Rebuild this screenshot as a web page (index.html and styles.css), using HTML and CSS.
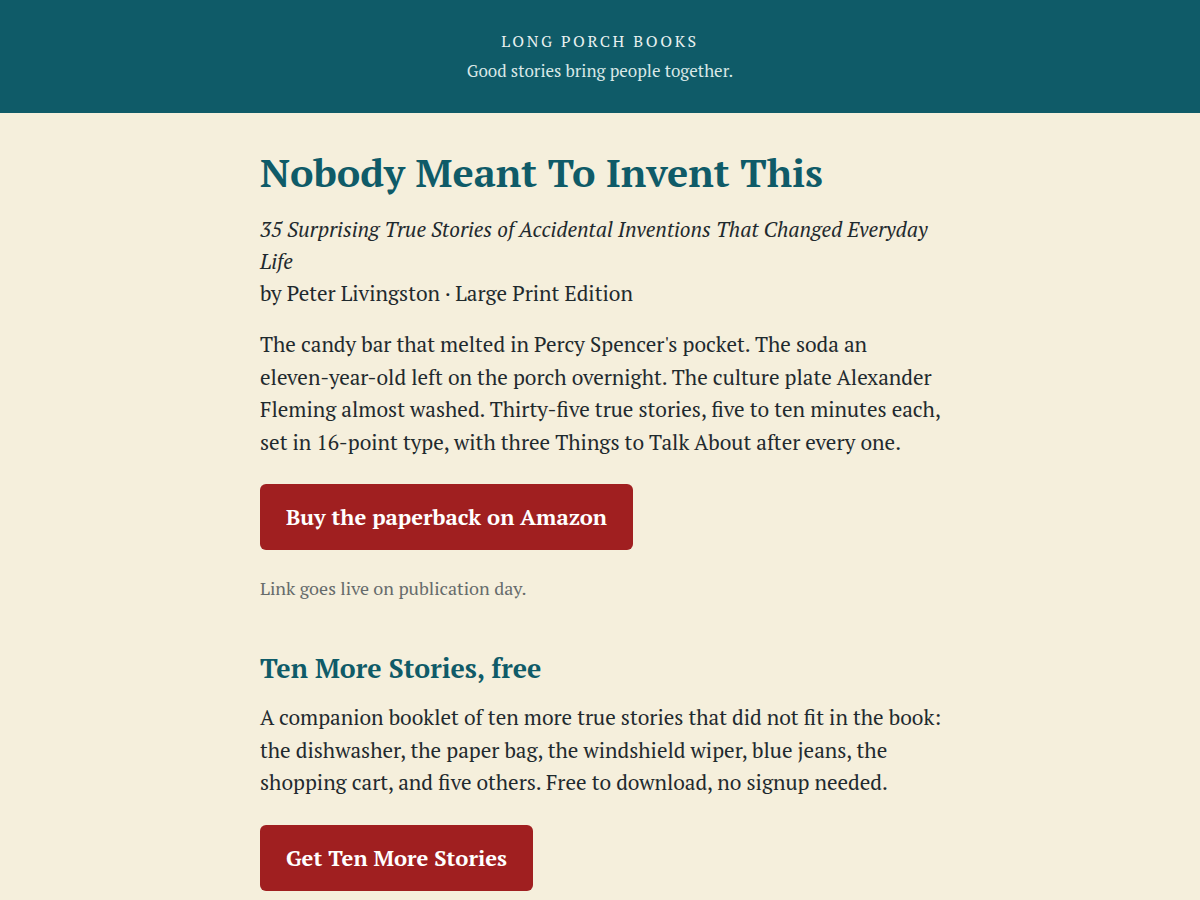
FILE: index.html
```html
<!DOCTYPE html>
<html lang="en">
<head>
<meta charset="utf-8">
<title>Nobody Meant To Invent This</title>
<link rel="stylesheet" href="styles.css">
</head>
<body>
<header class="site-header">
  <div class="brand">LONG PORCH BOOKS</div>
  <div class="tagline">Good stories bring people together.</div>
</header>
<main class="content">
  <h1 class="title">Nobody Meant To Invent This</h1>
  <p class="subtitle">35 Surprising True Stories of Accidental Inventions That Changed Everyday Life</p>
  <p class="byline">by Peter Livingston · Large Print Edition</p>
  <p class="body-text">The candy bar that melted in Percy Spencer's pocket. The soda an <span class="nowrap">eleven-year-old</span> left on the porch overnight. The culture plate Alexander Fleming almost washed. Thirty-five true stories, five to ten minutes each, set in <span class="nowrap">16-point</span> type, with three Things to Talk About after every one.</p>
  <a class="button" href="#">Buy the paperback on Amazon</a>
  <p class="note">Link goes live on publication day.</p>
  <h2 class="section-title">Ten More Stories, free</h2>
  <p class="body-text">A companion booklet of ten more true stories that did not fit in the book: the dishwasher, the paper bag, the windshield wiper, blue jeans, the shopping cart, and five others. Free to download, no signup needed.</p>
  <a class="button" href="#">Get Ten More Stories</a>
</main>
</body>
</html>
```
FILE: styles.css
```css
html, body {
  margin: 0;
  padding: 0;
}
body {
  background: #f5efdc;
  color: #1f2a2e;
  font-family: "PT Serif", Caladea, "Liberation Serif", serif;
}
.site-header {
  background: #0f5b68;
  height: 113px;
  box-sizing: border-box;
  padding-top: 30px;
  text-align: center;
  color: #e8f1f0;
}
.brand {
  font-size: 16px;
  letter-spacing: 2.6px;
  line-height: 22px;
}
.tagline {
  font-size: 17px;
  line-height: 22px;
  margin-top: 8px;
  color: #d9e8e7;
}
.content {
  width: 700px;
  margin-left: calc(50% - 340px);
  padding-top: 34px;
}
.title {
  margin: 0;
  font-size: 39.6px;
  line-height: 50px;
  color: #0f5b68;
  font-weight: bold;
}
.subtitle {
  margin: 16px 0 0;
  font-style: italic;
  font-size: 21px;
  line-height: 32px;
}
.byline {
  margin: 0;
  font-size: 21px;
  line-height: 33px;
}
.body-text {
  margin: 18px 0 0;
  font-size: 21px;
  line-height: 32.5px;
}
.nowrap {
  white-space: nowrap;
}
.button {
  display: inline-block;
  margin-top: 26px;
  background: #a01f20;
  color: #ffffff;
  text-decoration: none;
  font-weight: bold;
  font-size: 22px;
  line-height: 26px;
  padding: 20px 26px;
  border-radius: 6px;
}
.note {
  margin: 26px 0 0;
  font-size: 18px;
  line-height: 24px;
  color: #666b6b;
}
.section-title {
  margin: 50px 0 0;
  font-size: 26.7px;
  line-height: 36px;
  color: #0f5b68;
}
.section-title + .body-text {
  margin-top: 15px;
}
```
